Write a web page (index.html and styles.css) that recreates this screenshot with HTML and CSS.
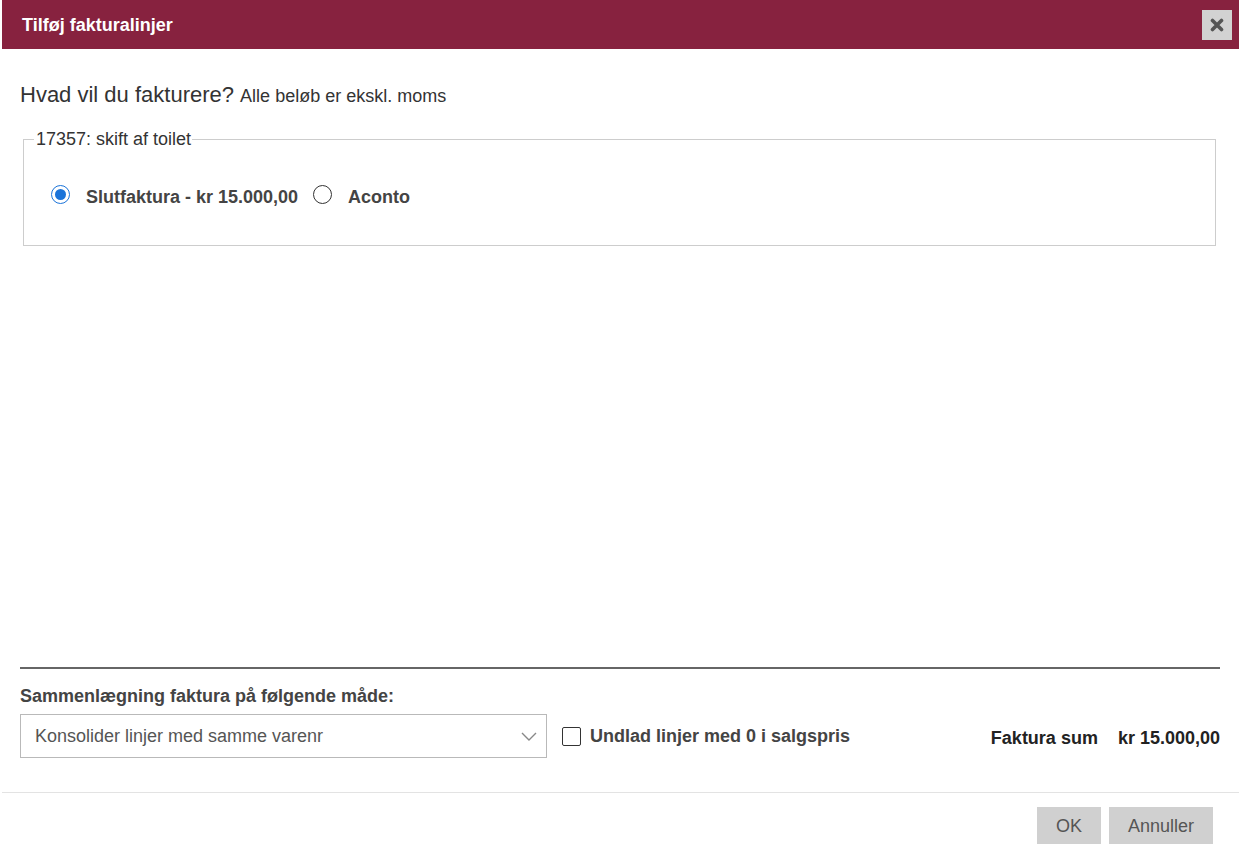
FILE: index.html
```html
<!DOCTYPE html>
<html lang="da">
<head>
<meta charset="utf-8">
<title>Tilføj fakturalinjer</title>
<link rel="stylesheet" href="styles.css">
</head>
<body>
<div class="dialog">
  <div class="dlg-header">
    <span class="dlg-title">Tilføj fakturalinjer</span>
    <button class="close-btn" type="button" aria-label="Luk">
      <svg width="14" height="14" viewBox="0 0 14 14"><path d="M2.5 2.5 L11.5 11.5 M11.5 2.5 L2.5 11.5" stroke="#555" stroke-width="3.6" stroke-linecap="round"/></svg>
    </button>
  </div>
  <div class="dlg-body">
    <div class="main">
      <h2 class="question">Hvad vil du fakturere? <span class="note">Alle beløb er ekskl. moms</span></h2>
      <fieldset class="order">
        <legend>17357: skift af toilet</legend>
        <div class="choices">
          <label class="choice"><span class="radio checked"></span>Slutfaktura - kr 15.000,00</label>
          <label class="choice"><span class="radio"></span>Aconto</label>
        </div>
      </fieldset>
    </div>
    <div class="summary">
      <div class="merge-label">Sammenlægning faktura på følgende måde:</div>
      <div class="summary-row">
        <div class="select">
          <span>Konsolider linjer med samme varenr</span>
          <svg class="chev" width="16" height="9" viewBox="0 0 16 9"><path d="M1 1 L8 8 L15 1" fill="none" stroke="#888" stroke-width="1.4"/></svg>
        </div>
        <label class="check"><span class="box"></span>Undlad linjer med 0 i salgspris</label>
        <div class="total"><span>Faktura sum</span><span>kr 15.000,00</span></div>
      </div>
    </div>
  </div>
  <div class="dlg-footer">
    <button class="btn" type="button">OK</button>
    <button class="btn" type="button">Annuller</button>
  </div>
</div>
</body>
</html>
```

FILE: styles.css
```css
* { box-sizing: border-box; }
html, body { margin: 0; padding: 0; background: #fff; }
body {
  font-family: "Liberation Sans", Arial, sans-serif;
  font-size: 18px;
  color: #333;
}
.dialog {
  margin-left: 2px;
  height: 865px;
  display: flex;
  flex-direction: column;
}
.dlg-header {
  height: 49px;
  background: #87223f;
  display: flex;
  align-items: center;
  justify-content: space-between;
  padding: 0 7px 0 20px;
  flex: none;
}
.dlg-title {
  color: #fff;
  font-weight: bold;
  font-size: 18px;
  margin-top: 1px;
}
.close-btn {
  width: 30px;
  height: 30px;
  border: 0;
  padding: 0;
  background: #d2d2d2;
  display: flex;
  align-items: center;
  justify-content: center;
  cursor: pointer;
}
.dlg-body {
  flex: 1;
  display: flex;
  flex-direction: column;
  padding: 0 19px 0 18px;
}
.main { flex: 1; }
.question {
  margin: 34px 0 0;
  font-size: 22px;
  line-height: 24px;
  font-weight: normal;
  color: #333;
}
.note { font-size: 18px; }
.order {
  margin: 21px 4px 0 3px;
  border: 1px solid #cdcdcd;
  padding: 37px 10px 37px 10px;
  min-width: 0;
}
.order legend {
  padding: 0 1px 0 2px;
  font-size: 18px;
  line-height: 21px;
  color: #333;
}
.choices {
  display: flex;
  align-items: flex-start;
  gap: 15px;
  padding-left: 17px;
}
.choice {
  display: flex;
  align-items: flex-start;
  gap: 16px;
  font-weight: bold;
  color: #444;
  line-height: 21px;
}
.radio {
  width: 19px;
  height: 19px;
  margin-top: -2px;
  border: 1px solid #333;
  border-radius: 50%;
  background: #fff;
  flex: none;
  position: relative;
}
.radio.checked {
  border-color: #1a73d9;
}
.radio.checked::after {
  content: "";
  position: absolute;
  left: 3px;
  top: 3px;
  width: 11px;
  height: 11px;
  border-radius: 50%;
  background: #1a73d9;
}
.summary {
  border-top: 2px solid #666;
  padding: 17px 0 34px;
}
.merge-label {
  font-weight: bold;
  color: #444;
  line-height: 21px;
}
.summary-row {
  margin-top: 7px;
  display: flex;
  align-items: center;
}
.select {
  width: 527px;
  height: 44px;
  border: 1px solid #b9b9b9;
  display: flex;
  align-items: center;
  justify-content: space-between;
  padding: 0 9px 0 14px;
  color: #555;
}
.chev { margin-top: 1px; }
.check {
  display: flex;
  align-items: center;
  gap: 9px;
  margin-left: 15px;
  margin-top: 1px;
  font-weight: bold;
  color: #444;
}
.box {
  width: 19px;
  height: 19px;
  border: 1px solid #333;
  border-radius: 2px;
  background: #fff;
  flex: none;
}
.total {
  margin-left: auto;
  margin-top: 4px;
  display: flex;
  gap: 20px;
  font-weight: bold;
  color: #222;
}
.dlg-footer {
  flex: none;
  border-top: 1px solid #e3e3e3;
  padding: 14px 26px 21px 0;
  display: flex;
  justify-content: flex-end;
  gap: 8px;
}
.btn {
  height: 37px;
  border: 0;
  background: #d0d0d0;
  color: #555;
  font-family: "Liberation Sans", Arial, sans-serif;
  font-size: 18px;
  padding: 0 19px;
  cursor: pointer;
  line-height: 39px;
}
```
